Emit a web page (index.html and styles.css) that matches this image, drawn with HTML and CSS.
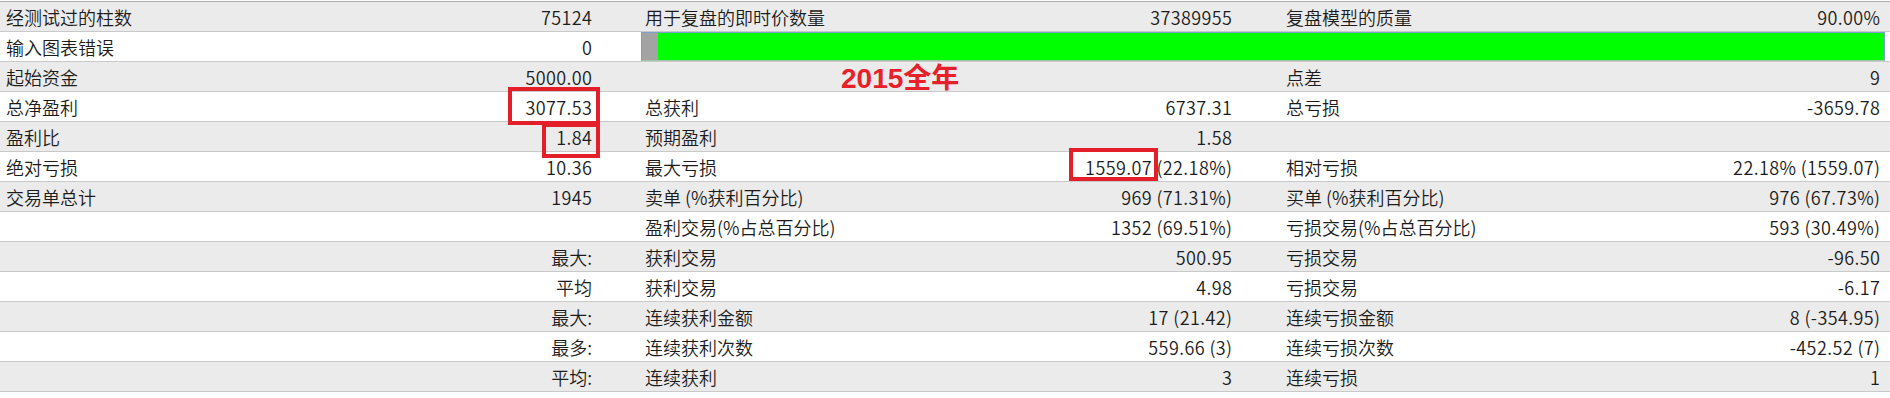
FILE: index.html
```html
<!DOCTYPE html>
<html lang="zh-CN">
<head>
<meta charset="utf-8">
<title>测试报告</title>
<link rel="stylesheet" href="styles.css">
</head>
<body>
<div class="report">
  <div class="row alt">
    <div class="g g1"><span>经测试过的柱数</span><span class="n">75124</span></div>
    <div class="g g2"><span>用于复盘的即时价数量</span><span class="n">37389955</span></div>
    <div class="g g3"><span>复盘模型的质量</span><span class="n">90.00%</span></div>
  </div>
  <div class="row">
    <div class="g g1"><span>输入图表错误</span><span class="n">0</span></div>
    <div class="barcell"><div class="bar"><div class="bar-gray"></div><div class="bar-green"></div></div></div>
  </div>
  <div class="row alt">
    <div class="g g1"><span>起始资金</span><span class="n">5000.00</span></div>
    <div class="g g2"></div>
    <div class="g g3"><span>点差</span><span class="n">9</span></div>
  </div>
  <div class="row">
    <div class="g g1"><span>总净盈利</span><span class="n">3077.53</span></div>
    <div class="g g2"><span>总获利</span><span class="n">6737.31</span></div>
    <div class="g g3"><span>总亏损</span><span class="n">-3659.78</span></div>
  </div>
  <div class="row alt">
    <div class="g g1"><span>盈利比</span><span class="n">1.84</span></div>
    <div class="g g2"><span>预期盈利</span><span class="n">1.58</span></div>
    <div class="g g3"></div>
  </div>
  <div class="row">
    <div class="g g1"><span>绝对亏损</span><span class="n">10.36</span></div>
    <div class="g g2"><span>最大亏损</span><span class="n">1559.07 (22.18%)</span></div>
    <div class="g g3"><span>相对亏损</span><span class="n">22.18% (1559.07)</span></div>
  </div>
  <div class="row alt">
    <div class="g g1"><span>交易单总计</span><span class="n">1945</span></div>
    <div class="g g2"><span>卖单 (%获利百分比)</span><span class="n">969 (71.31%)</span></div>
    <div class="g g3"><span>买单 (%获利百分比)</span><span class="n">976 (67.73%)</span></div>
  </div>
  <div class="row">
    <div class="g g1"></div>
    <div class="g g2"><span>盈利交易(%占总百分比)</span><span class="n">1352 (69.51%)</span></div>
    <div class="g g3"><span>亏损交易(%占总百分比)</span><span class="n">593 (30.49%)</span></div>
  </div>
  <div class="row alt">
    <div class="g g1 right"><span>最大:</span></div>
    <div class="g g2"><span>获利交易</span><span class="n">500.95</span></div>
    <div class="g g3"><span>亏损交易</span><span class="n">-96.50</span></div>
  </div>
  <div class="row">
    <div class="g g1 right"><span>平均</span></div>
    <div class="g g2"><span>获利交易</span><span class="n">4.98</span></div>
    <div class="g g3"><span>亏损交易</span><span class="n">-6.17</span></div>
  </div>
  <div class="row alt">
    <div class="g g1 right"><span>最大:</span></div>
    <div class="g g2"><span>连续获利金额</span><span class="n">17 (21.42)</span></div>
    <div class="g g3"><span>连续亏损金额</span><span class="n">8 (-354.95)</span></div>
  </div>
  <div class="row">
    <div class="g g1 right"><span>最多:</span></div>
    <div class="g g2"><span>连续获利次数</span><span class="n">559.66 (3)</span></div>
    <div class="g g3"><span>连续亏损次数</span><span class="n">-452.52 (7)</span></div>
  </div>
  <div class="row alt">
    <div class="g g1 right"><span>平均:</span></div>
    <div class="g g2"><span>连续获利</span><span class="n">3</span></div>
    <div class="g g3"><span>连续亏损</span><span class="n">1</span></div>
  </div>

  <div class="note">2015全年</div>
  <div class="mark mark-net"></div>
  <div class="mark mark-pf"></div>
  <div class="mark mark-dd"></div>
</div>
</body>
</html>
```

FILE: styles.css
```css
html, body {
  margin: 0;
  padding: 0;
  background: #ffffff;
}

body {
  font-family: "Noto Sans CJK SC", "Noto Sans", sans-serif;
  font-size: 18px;
  font-weight: 350;
  color: #1c1c1c;
}

.report {
  position: relative;
  width: 1890px;
  margin-top: 1px;
  border-top: 1px solid #a9a9a9;
}

.row {
  display: flex;
  height: 29px;
  border-bottom: 1px solid #c9c9c9;
  background: #ffffff;
}

.row.alt {
  background: #ebebeb;
}

.g {
  display: flex;
  justify-content: space-between;
  align-items: center;
  box-sizing: border-box;
  height: 29px;
  line-height: 29px;
  padding-top: 2px;
  white-space: nowrap;
}

.g.right {
  justify-content: flex-end;
}

.n {
  letter-spacing: 0.4px;
  margin-right: -0.4px;
}

.g1 {
  width: 640px;
  padding-left: 6px;
  padding-right: 48px;
}

.g2 {
  width: 640px;
  padding-left: 5px;
  padding-right: 48px;
}

.g3 {
  width: 610px;
  padding-left: 6px;
  padding-right: 10px;
}

.barcell {
  flex: 1;
  display: flex;
  padding-left: 1px;
  padding-right: 5px;
}

.bar {
  flex: 1;
  display: flex;
  box-sizing: border-box;
  height: 29px;
  border: 1px solid #7d9dcf;
  border-bottom-color: #9fc7a6;
}

.bar-gray {
  width: 16px;
  background: #a3a3a3;
}

.bar-green {
  flex: 1;
  background: #00ff00;
}

.note {
  position: absolute;
  left: 841px;
  top: 63px;
  font-family: "Liberation Sans", "Noto Sans CJK SC", sans-serif;
  font-weight: bold;
  font-size: 28px;
  line-height: 28px;
  color: #e8202a;
  white-space: nowrap;
}

.mark {
  position: absolute;
  box-sizing: border-box;
  border: 4px solid #e3202a;
}

.mark-net {
  left: 508px;
  top: 85px;
  width: 92px;
  height: 38px;
}

.mark-pf {
  left: 542px;
  top: 121px;
  width: 58px;
  height: 35px;
}

.mark-dd {
  left: 1069px;
  top: 146px;
  width: 89px;
  height: 33px;
}
```
